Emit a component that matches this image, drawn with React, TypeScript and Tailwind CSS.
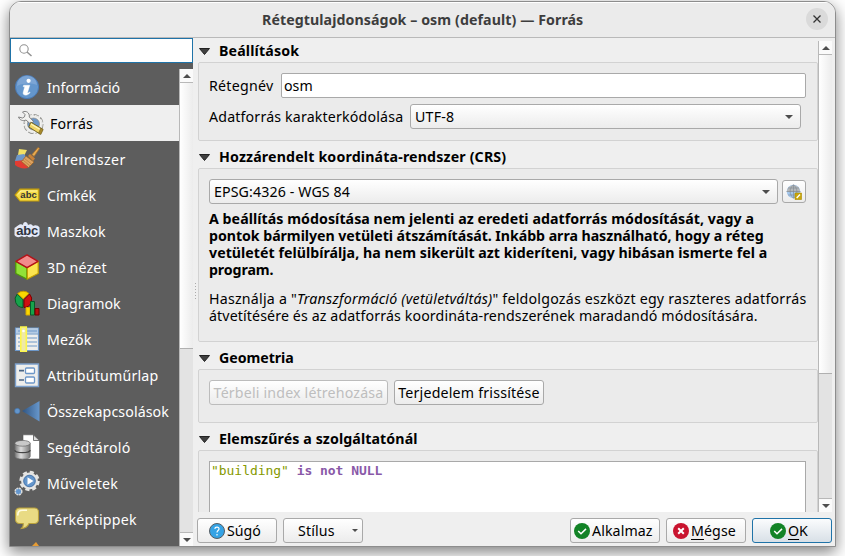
import React, { ReactNode } from "react";

const Svg = ({ children, size = 26 }: { children: ReactNode; size?: number }) => (
  <svg width={size} height={size} viewBox="0 0 26 26" className="block shrink-0" fill="none">
    {children}
  </svg>
);

const InfoIcon = () => (
  <Svg>
    <circle cx="13" cy="13" r="11.6" fill="#6496cc" stroke="#4a7ab5" strokeWidth="1" />
    <path d="M3 12a10 10 0 0 1 20-1C17 9 10 9 3 12Z" fill="#8fb3dd" opacity=".55" />
    <circle cx="14.6" cy="6.800" r="2.100" fill="#fff" />
    <path d="M9.600 11.200h6.200l-2.200 7.200c-.2 1 .7.7 2-.5l.6.7c-2 2.200-3.500 2.700-5.100 2.500-1.600-.2-2.300-1.300-1.900-2.800l1.500-5.500H9.200Z" fill="#fff" stroke="#fff" strokeWidth=".4" />
  </Svg>
);

const SourceIcon = () => (
  <Svg>
    <circle cx="15.500" cy="14" r="8.800" stroke="#8b8b87" strokeWidth="2.400" strokeDasharray="5 1.900" />
    <circle cx="15.500" cy="14" r="8.600" fill="#f1f1ef" stroke="#e8e8e6" strokeWidth="1.400" strokeDasharray="5 1.900" />
    <circle cx="15.500" cy="14" r="6" fill="#6d97c8" stroke="#8b8b87" strokeWidth=".7" />
    <path d="M.5 7 4.500 8l2-1.200L7 4.500 4.500 2C8 .3 11.800 2.500 11.300 7l4.200 4.500-3 2.500-4.500-4C5 11.500 1.500 10 .5 7Z" fill="#f2f2f0" stroke="#777" strokeWidth=".9" />
    <path d="m12.800 12.200 12 7-2.500 5L10.800 17Z" fill="#f1d665" stroke="#6b5c20" strokeWidth=".9" />
    <path d="m13 14 10 6" stroke="#fff6bd" strokeWidth="1.200" />
    <path d="m22.800 18 2.400 1.500-2.300 5-2.300-1.400Z" fill="#a98a2c" stroke="#6b5c20" strokeWidth=".5" />
  </Svg>
);

const BrushIcon = () => (
  <Svg>
    <path d="M5 3 13 4 10 10 4 9Z" fill="#f2e064" />
    <path d="m3 9 7-1 5 7-5 3-9-3Z" fill="#6d97c8" />
    <path d="m1 15 10-1 3 8c-5 1-9 0-13-3Z" fill="#e23c32" />
    <path d="m12 10 8 6-5.500 5.500L7.500 15.500Z" fill="#dca260" stroke="#9a6427" strokeWidth=".8" />
    <path d="m9 14 7 6M10.500 12.500l7 5.500" stroke="#b5773a" strokeWidth=".7" />
    <path d="m14 10 2-2 5 4.500-2 2.500Z" fill="#c98137" />
    <path d="m18 8.500 6-7 1.500 1-5.500 8Z" fill="#e9ad52" stroke="#a8702d" strokeWidth=".8" />
  </Svg>
);

const LabelIcon = () => (
  <Svg>
    <path d="M1.200 13 6 7.200h18.800v11.800H6Z" fill="#f5dd49" stroke="#c59e0a" strokeWidth="1.200" />
    <path d="M4 12.500 7 9h16" stroke="#fff3a3" />
    <text x="6.300" y="16" fontSize="9.500" fontWeight="700" fontFamily="Liberation Sans, sans-serif" fill="#333" textLength="16.500">abc</text>
  </Svg>
);

const MaskIcon = () => (
  <Svg>
    <path d="M4 7.500c2-2 4-1.500 5-.5 0-4 4.500-4 5 0 1.500-1 4-1 5 1 2.500-1.500 5-.5 6.500 1.500v7c-2 3-5 3-7 1.500-2 2-4 1.500-5.500 0-2 1.500-4 1-5 0-3 1.800-6 1.500-7.500-1V10Z" fill="#e3e8f7" />
    <text x="2.200" y="16.500" fontSize="13" fontWeight="700" fontFamily="Liberation Sans, sans-serif" fill="#2f3440" textLength="22">abc</text>
  </Svg>
);

const CubeIcon = () => (
  <Svg>
    <path d="M1.800 7.500v12L12.800 25V13.500Z" fill="#91e238" stroke="#4e9a06" strokeWidth="1.200" />
    <path d="M24.200 7.500v12L13.300 25V13.500Z" fill="#fbe44f" stroke="#c4a000" strokeWidth="1.200" />
    <path d="M13 .9 24 7.300 13 13.600 2 7.300Z" fill="#f28b8b" stroke="#b51218" strokeWidth="1.400" strokeLinejoin="round" />
  </Svg>
);

const DiagramIcon = () => (
  <Svg>
    <path d="M9 9.500V17.500A8 8 0 0 1 3.300 4Z" fill="#17a34b" stroke="#075a27" />
    <path d="M9.300 9 3.600 3.600a8 8 0 0 1 11.400 0Z" fill="#fbd800" stroke="#c49a00" />
    <path d="M10 9.500 15.500 4A8 8 0 0 1 10 17.500Z" fill="#cf1111" stroke="#7a0000" />
    <path d="M12 17.500h4v7.500h-4z" fill="#fbd800" stroke="#d8a800" />
    <path d="M16.500 11.500h4V25h-4z" fill="#17a34b" stroke="#075a27" />
    <path d="M21 18.500h4V25h-4z" fill="#b30d0d" stroke="#6b0000" />
  </Svg>
);

const FieldsIcon = () => (
  <Svg>
    <path d="M1.500 2h23v22.500h-23z" fill="#eeeeec" stroke="#6d97c8" strokeWidth="1.200" />
    <path d="M2 2.500h22v5H2z" fill="#b4cbe4" />
    <path d="M4 5h19M2 8h22" stroke="#6d97c8" strokeWidth="1.200" />
    <path d="M4 12h19M4 16h19M4 20h19" stroke="#6d97c8" strokeWidth="1.200" />
    <path d="M6.800 1h5.500v24.500H6.800z" fill="#efe9a7" stroke="#fcf64b" strokeWidth="1.600" />
    <circle cx="9.500" cy="5" r="1.300" fill="#fff" />
  </Svg>
);

const FormIcon = () => (
  <Svg>
    <path d="M1.500 2h23v22.500h-23z" fill="#eeeeec" stroke="#7ca0cc" strokeWidth="1.400" />
    <path d="M5 8.700h5M5 18h5" stroke="#4b6685" strokeWidth="1.700" />
    <rect x="11.500" y="6" width="9" height="5.500" rx="1" fill="#fff" stroke="#6d97c8" strokeWidth="1.300" />
    <rect x="11.500" y="15" width="9" height="6" rx="1" fill="#fff" stroke="#6d97c8" strokeWidth="1.300" />
  </Svg>
);

const JoinIcon = () => (
  <Svg>
    <defs>
      <linearGradient id="join"><stop stopColor="#2f5481" /><stop offset="1" stopColor="#6797cc" /></linearGradient>
    </defs>
    <circle cx="3.300" cy="13" r="2.700" fill="#6496cc" stroke="#3f6ea5" strokeWidth=".6" />
    <path d="M8 13 25.500 3v20.500Z" fill="url(#join)" />
  </Svg>
);

const StorageIcon = () => (
  <Svg>
    <defs>
      <linearGradient id="drum"><stop stopColor="#777" /><stop offset=".4" stopColor="#ddd" /><stop offset="1" stopColor="#777" /></linearGradient>
    </defs>
    <path d="M9 .8h10.500l6 5.500V25H9Z" fill="#fff" stroke="#555" strokeWidth=".6" />
    <path d="M19.500 1v5.500h6Z" fill="#ddd" stroke="#555" strokeWidth=".8" />
    <path d="M.8 9.500h15.400v13c0 3.500-15.400 3.500-15.400 0Z" fill="url(#drum)" stroke="#666" strokeWidth=".7" />
    <ellipse cx="8.500" cy="9.300" rx="7.700" ry="2.900" fill="#c9c9c9" stroke="#666" strokeWidth=".7" />
    <path d="M.8 16c0 3.500 15.400 3.500 15.400 0" stroke="#444" strokeWidth="1.100" />
  </Svg>
);

const ActionIcon = () => (
  <Svg>
    <circle cx="15.500" cy="11" r="8.900" stroke="#e5e5e3" strokeWidth="2.600" strokeDasharray="4.100 2.890" />
    <circle cx="15.500" cy="11" r="7.200" fill="#6496cc" stroke="#e5e5e3" strokeWidth="2.400" />
    <circle cx="15.500" cy="11" r="5.800" stroke="#3d6aa0" strokeWidth=".8" />
    <path d="m13.500 7.200 6 3.800-6 3.800Z" fill="#fff" />
    <circle cx="4.500" cy="21.500" r="3.300" fill="#6496cc" stroke="#dcdcda" strokeWidth="1.500" strokeDasharray="2 .6" />
  </Svg>
);

const TipIcon = () => (
  <Svg>
    <path d="M5.500 2h15a4 4 0 0 1 4 4v7.500a4 4 0 0 1-4 4h-5.500c-1 2.500-3 4.500-7.500 5 1.500-1.500 2-3 1.700-5H5.500a4 4 0 0 1-4-4V6a4 4 0 0 1 4-4Z" fill="#e9db84" stroke="#b9a13c" strokeWidth="1.100" />
    <path d="M3.800 9.500c0-4 1.200-5.200 5.200-5.200h4" stroke="#fffce0" strokeWidth="1.600" />
  </Svg>
);

const items: [string, () => React.JSX.Element, string][] = [
  ["Információ", InfoIcon, ""],
  ["Forrás", SourceIcon, "tracking-[0.15px]"],
  ["Jelrendszer", BrushIcon, "tracking-[0.45px]"],
  ["Címkék", LabelIcon, ""],
  ["Maszkok", MaskIcon, "tracking-[0.1px]"],
  ["3D nézet", CubeIcon, "tracking-[0.15px]"],
  ["Diagramok", DiagramIcon, ""],
  ["Mezők", FieldsIcon, "tracking-[0.2px]"],
  ["Attribútuműrlap", FormIcon, "tracking-[0.2px]"],
  ["Összekapcsolások", JoinIcon, "tracking-[0.1px]"],
  ["Segédtároló", StorageIcon, "tracking-[0.25px]"],
  ["Műveletek", ActionIcon, "tracking-[0.2px]"],
  ["Térképtippek", TipIcon, "tracking-[0.25px]"],
];

const Tri = ({ up = false, w = 8 }: { up?: boolean; w?: number }) => (
  <svg width={w} height={w / 2} viewBox="0 0 8 4" className="block shrink-0">
    <path d={up ? "M0 4 4 0l4 4Z" : "M0 0h8L4 4Z"} fill="#4d4d4d" />
  </svg>
);

const ScrollBar = ({ thumb }: { thumb: string }) => (
  <div className="flex h-full w-[14px] shrink-0 flex-col border-l border-[#b8b8b8] bg-[#e3e3e3]">
    <div className="flex h-[14px] shrink-0 items-center justify-center border-b border-[#b8b8b8] bg-[#fafafa]"><Tri up /></div>
    <div className={`${thumb} shrink-0 border-b border-[#b0b0b0] bg-linear-to-r from-white to-[#ececec]`} />
    <div className="flex-1" />
    <div className="flex h-[14px] shrink-0 items-center justify-center border-t border-[#b8b8b8] bg-[#fafafa]"><Tri /></div>
  </div>
);

const Header = ({ children, track }: { children: ReactNode; track: string }) => (
  <div className="flex h-[21px] shrink-0 items-center whitespace-nowrap pl-[1px] font-bold">
    <svg width="11" height="7" viewBox="0 0 11 7" className="mr-[9px]"><path d="M.5.500h10L5.500 6.500Z" fill="#404040" stroke="#222" /></svg>
    <span className={`mb-[2px] ${track}`}>{children}</span>
  </div>
);

const box = "w-[620px] shrink-0 rounded-[2px] border border-[#d2d2d2] bg-[#ebebeb] pl-[10px]";
const btn = "flex h-[25px] shrink-0 items-center whitespace-nowrap rounded-[3px] border border-[#a9a9a9] bg-linear-to-b from-white to-[#ececec]";

const Check = () => (
  <svg width="16" height="16" viewBox="0 0 16 16" className="shrink-0"><circle cx="8" cy="8" r="8" fill="#128326" /><path d="m4.200 8 2.800 2.700 5-4.800" stroke="#fff" strokeWidth="1.500" fill="none" /></svg>
);

export default function App() {
  return (
    <div className="h-[556px] w-[845px] overflow-hidden bg-white pl-[9px] pt-px font-['Noto_Sans','Open_Sans',sans-serif] text-[14.2px] leading-[17px] text-black">
      <div className="flex h-[546px] w-[827px] flex-col overflow-hidden rounded-t-[12px] border border-[#8d8d8d] bg-[#efefef] shadow-[0_5px_15px_rgba(0,0,0,0.5)]">
        <div className="flex h-[36px] shrink-0 items-center border-b border-[#b9b9b9] bg-[#ebebeb] pr-[7px] shadow-[inset_0_1px_0_white]">
          <div className="w-[252px] shrink-0" />
          <h1 className="flex-1 whitespace-nowrap font-bold tracking-[0.08px] text-[#3d3d3d]">Rétegtulajdonságok – osm (default) — Forrás</h1>
          <button className="mb-px flex size-[22px] items-center justify-center rounded-full bg-[#dadada]">
            <svg width="8" height="8" viewBox="0 0 8 8"><path d="m.5.500 7 7m0-7-7 7" stroke="#333" strokeWidth="1.300" /></svg>
          </button>
        </div>
        <div className="flex min-h-0 flex-1">
          <aside className="flex w-[183px] shrink-0 flex-col bg-[#5d5d5d]">
            <div className="flex h-[25px] shrink-0 items-center border border-[#1f73a8] bg-white pl-[8px]">
              <svg width="13" height="13" viewBox="0 0 13 13" fill="none" stroke="#929292" strokeWidth="1.100"><circle cx="5" cy="5" r="4.200" /><path d="m8 8 4.500 4" strokeWidth="1.500" /></svg>
            </div>
            <div className="mt-[6px] flex min-h-0 flex-1">
              <div className="w-[169px] overflow-hidden text-white">
                {items.map(([name, Icon, track], i) => (
                  <div key={name} className={`flex h-[36px] items-center whitespace-nowrap ${i === 1 ? "gap-[6px] bg-[#efefef] pl-[8px] text-black" : "gap-[7px] pl-[4px]"}`}>
                    <Icon />
                    <span className={track}>{name}</span>
                  </div>
                ))}
                <div className="flex h-[9px] items-end pl-[22px]"><svg width="7" height="4"><path d="m0 4 4-4 3 4Z" fill="#e69c35" /></svg></div>
              </div>
              <ScrollBar thumb="h-[266px]" />
            </div>
          </aside>
          <div className="flex w-[5px] shrink-0 items-center pl-[2px]">
            <div className="h-[18px] w-px bg-[repeating-linear-gradient(#aaa_0_1px,transparent_1px_3px)]" />
          </div>
          <main className="flex min-w-0 flex-1 flex-col pt-[3px]">
            <div className="flex h-[471px] shrink-0">
              <div className="flex w-[620px] flex-col overflow-hidden">
                <Header track="tracking-[0.15px]">Beállítások</Header>
                <section className={`${box} h-[79px] pt-[10px]`}>
                  <div className="flex h-[25px] items-center">
                    <label className="w-[72px] shrink-0 whitespace-nowrap tracking-[0.25px]">Rétegnév</label>
                    <div className="flex h-[25px] w-[525px] items-center rounded-[2px] border border-[#a9a9a9] bg-white pl-[2px]">osm</div>
                  </div>
                  <div className="mt-[6px] flex h-[25px] items-center">
                    <label className="w-[201px] shrink-0 whitespace-nowrap tracking-[0.17px]">Adatforrás karakterkódolása</label>
                    <div className={`${btn} w-[391px] justify-between pl-[4px] pr-[7px] tracking-[0.2px]`}>UTF-8<Tri /></div>
                  </div>
                </section>
                <div className="h-[6px] shrink-0" />
                <Header track="tracking-[0.16px]">Hozzárendelt koordináta-rendszer (CRS)</Header>
                <section className={`${box} h-[174px] pt-[10px]`}>
                  <div className="flex items-center">
                    <div className={`${btn} w-[569px] justify-between pl-[4px] pr-[7px] tracking-[0.12px]`}>EPSG:4326 - WGS 84<Tri /></div>
                    <div className="ml-[4px] flex h-[23px] w-[24px] items-center justify-center rounded-[3px] border border-[#a9a9a9] bg-linear-to-b from-white to-[#ececec]">
                      <svg width="16" height="16" viewBox="0 0 16 16" fill="none">
                        <circle cx="7.500" cy="7.500" r="6.800" fill="#a5c8ee" />
                        <path d="M.7 8a6.800 6.800 0 0 1 13.600 0Z" fill="#b5b8ba" />
                        <path d="M.5 7.500h14M2 4h11M2 11h11M7.500.700v13.600M7.500.700c-4.500 4-4.500 9.600 0 13.600M7.500.700c4.500 4 4.500 9.600 0 13.600" stroke="#7c8790" strokeWidth=".6" />
                        <path d="M9 9h6.500v6.500H9z" fill="#c9a60a" stroke="#a88a00" strokeWidth=".6" /><path d="m10.700 14 3.300-3.500" stroke="#fff" strokeWidth="1.400" />
                      </svg>
                    </div>
                  </div>
                  <div className="mt-[6px] whitespace-nowrap font-bold">
                    <p className="tracking-[0.05px]">A beállítás módosítása nem jelenti az eredeti adatforrás módosítását, vagy a</p>
                    <p className="tracking-[-0.05px]">pontok bármilyen vetületi átszámítását. Inkább arra használható, hogy a réteg</p>
                    <p className="tracking-[0.03px]">vetületét felülbírálja, ha nem sikerült azt kideríteni, vagy hibásan ismerte fel a</p>
                    <p className="tracking-[-0.1px]">program.</p>
                  </div>
                  <div className="mt-[12px] whitespace-nowrap">
                    <p className="tracking-[0.23px]">Használja a "<i>Transzformáció (vetületváltás)</i>" feldolgozás eszközt egy raszteres adatforrás</p>
                    <p className="tracking-[0.12px]">átvetítésére és az adatforrás koordináta-rendszerének maradandó módosítására.</p>
                  </div>
                </section>
                <div className="h-[6px] shrink-0" />
                <Header track="tracking-[-0.05px]">Geometria</Header>
                <section className={`${box} flex h-[54px] gap-[6px] pt-[10px]`}>
                  <div className={`${btn} w-[179px] justify-center border-[#bcbcbc] tracking-[0.17px] text-[#bebebe]`}><span>Térbeli index létrehozása</span></div>
                  <div className={`${btn} w-[150px] justify-center tracking-[0.2px]`}><span>Terjedelem frissítése</span></div>
                </section>
                <div className="h-[6px] shrink-0" />
                <Header track="tracking-[0.1px]">Elemszűrés a szolgáltatónál</Header>
                <section className={`${box} h-[100px] pt-[10px]`}>
                  <div className="h-[90px] w-[597px] border border-[#a9a9a9] bg-white pl-[1px] font-['DejaVu_Sans_Mono',monospace] text-[13px] tracking-[-0.04px]">
                    <span className="text-[#859900]">"building"</span> <b className="text-[#8959a8]">is not NULL</b>
                  </div>
                </section>
              </div>
              <ScrollBar thumb="h-[319px]" />
            </div>
            <footer className="-ml-px mt-[6px] flex shrink-0 gap-[6px]">
              <div className={`${btn} w-[80px] pl-[11px]`}>
                <svg width="16" height="16" viewBox="0 0 16 16" className="mr-[2px] shrink-0"><circle cx="8" cy="8" r="7.500" fill="#35a3e5" stroke="#555d63" /><path d="M5.800 5.900C6 3.500 10.300 3.600 10 6c-.2 1.600-2 1.600-2 3.600M8 11v1.500" stroke="#fff" strokeWidth="1.200" fill="none" /></svg>
                <span>Súgó</span>
              </div>
              <div className={`${btn} w-[80px] justify-between pl-[14px] pr-[4px] tracking-[0.15px]`}><span>Stílus</span><Tri w={6} /></div>
              <div className="w-[195px] shrink-0" />
              <div className={`${btn} w-[90px] gap-[2px] pl-[3px] tracking-[0.1px]`}><Check /><span>Alkalmaz</span></div>
              <div className={`${btn} w-[80px] gap-[2px] pl-[6px] tracking-[0.1px]`}>
                <svg width="16" height="16" viewBox="0 0 16 16" className="shrink-0"><circle cx="8" cy="8" r="8" fill="#c9142f" /><path d="m5.200 5.200 5.600 5.600m0-5.600-5.600 5.600" stroke="#fff" strokeWidth="2" /></svg>
                <span><u className="underline-offset-3">M</u>égse</span>
              </div>
              <div className="flex h-[25px] w-[80px] shrink-0 items-center gap-[2px] rounded-[3px] border border-[#1f73a8] bg-linear-to-b from-[#fbfcfd] to-[#d8e0e7] pl-[17px]"><Check /><span><u className="underline-offset-3">O</u>K</span></div>
            </footer>
          </main>
        </div>
      </div>
    </div>
  );
}
